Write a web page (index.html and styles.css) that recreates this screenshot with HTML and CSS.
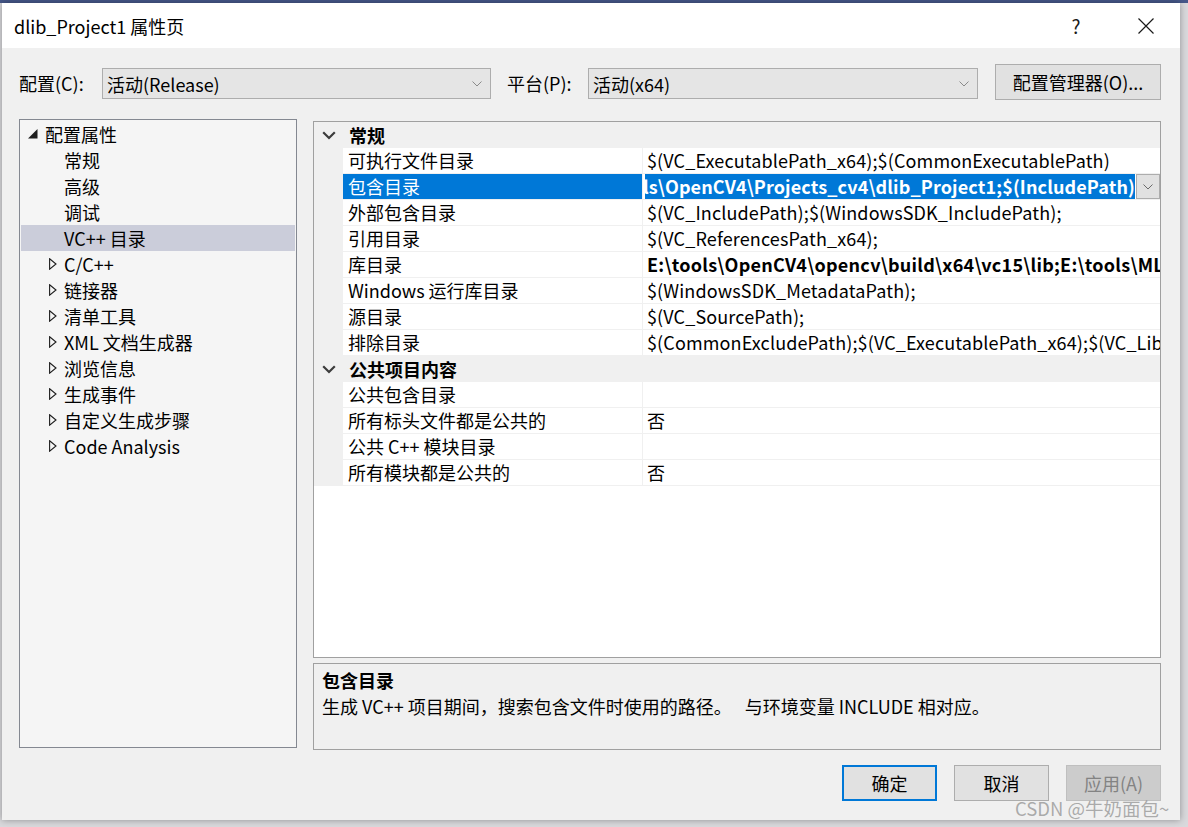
FILE: index.html
```html
<!DOCTYPE html>
<html>
<head>
    <meta charset="utf-8">
    <title>dlib_Project1 属性页</title>
    <link rel="stylesheet" href="styles.css">
</head>
<body>
    <div class="dialog">
        <div class="titlebar">
            <span class="title">dlib_Project1 属性页</span>
            <span class="help">?</span>
            <svg class="close" width="16" height="16" viewBox="0 0 16 16">
                <path d="M0.5 0.5 L15.5 15.5 M15.5 0.5 L0.5 15.5" stroke="#1a1a1a" stroke-width="1.2" fill="none"/>
            </svg>
        </div>
        <div class="content">
            <div class="config-row">
                <span class="lbl lbl-config">配置(C):</span>
                <div class="combo combo-config">
                    <span>活动(Release)</span>
                    <svg class="combo-arrow" width="10" height="6" viewBox="0 0 10 6"><path d="M0.5 0.5 L5 5 L9.5 0.5" stroke="#8a8a8a" fill="none"/></svg>
                </div>
                <span class="lbl lbl-platform">平台(P):</span>
                <div class="combo combo-platform">
                    <span>活动(x64)</span>
                    <svg class="combo-arrow" width="10" height="6" viewBox="0 0 10 6"><path d="M0.5 0.5 L5 5 L9.5 0.5" stroke="#8a8a8a" fill="none"/></svg>
                </div>
                <div class="btn btn-manager">配置管理器(O)...</div>
            </div>

            <div class="main">
                <div class="tree">
                    <div class="node root">
                        <svg class="tri-open" width="10" height="10" viewBox="0 0 10 10"><path d="M9.5 0 L9.5 9.5 L0 9.5 Z" fill="#1e1e1e"/></svg>
                        <span>配置属性</span>
                    </div>
                    <div class="node leaf">常规</div>
                    <div class="node leaf">高级</div>
                    <div class="node leaf">调试</div>
                    <div class="node leaf current">VC++ 目录</div>
                    <div class="node closed"><svg class="tri" width="8" height="12" viewBox="0 0 8 12"><path d="M0.6 0.8 L7 6 L0.6 11.2 Z" stroke="#1e1e1e" stroke-width="1.1" fill="none"/></svg><span>C/C++</span></div>
                    <div class="node closed"><svg class="tri" width="8" height="12" viewBox="0 0 8 12"><path d="M0.6 0.8 L7 6 L0.6 11.2 Z" stroke="#1e1e1e" stroke-width="1.1" fill="none"/></svg><span>链接器</span></div>
                    <div class="node closed"><svg class="tri" width="8" height="12" viewBox="0 0 8 12"><path d="M0.6 0.8 L7 6 L0.6 11.2 Z" stroke="#1e1e1e" stroke-width="1.1" fill="none"/></svg><span>清单工具</span></div>
                    <div class="node closed"><svg class="tri" width="8" height="12" viewBox="0 0 8 12"><path d="M0.6 0.8 L7 6 L0.6 11.2 Z" stroke="#1e1e1e" stroke-width="1.1" fill="none"/></svg><span>XML 文档生成器</span></div>
                    <div class="node closed"><svg class="tri" width="8" height="12" viewBox="0 0 8 12"><path d="M0.6 0.8 L7 6 L0.6 11.2 Z" stroke="#1e1e1e" stroke-width="1.1" fill="none"/></svg><span>浏览信息</span></div>
                    <div class="node closed"><svg class="tri" width="8" height="12" viewBox="0 0 8 12"><path d="M0.6 0.8 L7 6 L0.6 11.2 Z" stroke="#1e1e1e" stroke-width="1.1" fill="none"/></svg><span>生成事件</span></div>
                    <div class="node closed"><svg class="tri" width="8" height="12" viewBox="0 0 8 12"><path d="M0.6 0.8 L7 6 L0.6 11.2 Z" stroke="#1e1e1e" stroke-width="1.1" fill="none"/></svg><span>自定义生成步骤</span></div>
                    <div class="node closed"><svg class="tri" width="8" height="12" viewBox="0 0 8 12"><path d="M0.6 0.8 L7 6 L0.6 11.2 Z" stroke="#1e1e1e" stroke-width="1.1" fill="none"/></svg><span>Code Analysis</span></div>
                </div>

                <div class="right-col">
                    <div class="grid">
                        <div class="cat">
                            <span class="gut"><svg width="14" height="9" viewBox="0 0 14 9"><path d="M1.2 1.2 L7 7 L12.8 1.2" stroke="#3c3c3c" stroke-width="2.2" fill="none"/></svg></span>
                            <span class="cat-name">常规</span>
                        </div>
                        <div class="row"><span class="gut"></span><span class="name">可执行文件目录</span><span class="val">$(VC_ExecutablePath_x64);$(CommonExecutablePath)</span></div>
                        <div class="row selected">
                            <span class="gut"></span>
                            <span class="name">包含目录</span>
                            <span class="val">
                                <span class="edit"><span>E:\tools\OpenCV4\Projects_cv4\dlib_Project1;$(IncludePath)</span></span>
                                <span class="drop"><svg width="10" height="6" viewBox="0 0 10 6"><path d="M0.5 0.5 L5 5 L9.5 0.5" stroke="#6a6a6a" fill="none"/></svg></span>
                            </span>
                        </div>
                        <div class="row"><span class="gut"></span><span class="name">外部包含目录</span><span class="val">$(VC_IncludePath);$(WindowsSDK_IncludePath);</span></div>
                        <div class="row"><span class="gut"></span><span class="name">引用目录</span><span class="val">$(VC_ReferencesPath_x64);</span></div>
                        <div class="row"><span class="gut"></span><span class="name">库目录</span><span class="val bold">E:\tools\OpenCV4\opencv\build\x64\vc15\lib;E:\tools\ML\dlib\build\Release;$(LibraryPath)</span></div>
                        <div class="row"><span class="gut"></span><span class="name">Windows 运行库目录</span><span class="val">$(WindowsSDK_MetadataPath);</span></div>
                        <div class="row"><span class="gut"></span><span class="name">源目录</span><span class="val">$(VC_SourcePath);</span></div>
                        <div class="row"><span class="gut"></span><span class="name">排除目录</span><span class="val">$(CommonExcludePath);$(VC_ExecutablePath_x64);$(VC_LibraryPath_x64)</span></div>
                        <div class="cat">
                            <span class="gut"><svg width="14" height="9" viewBox="0 0 14 9"><path d="M1.2 1.2 L7 7 L12.8 1.2" stroke="#3c3c3c" stroke-width="2.2" fill="none"/></svg></span>
                            <span class="cat-name">公共项目内容</span>
                        </div>
                        <div class="row"><span class="gut"></span><span class="name">公共包含目录</span><span class="val"></span></div>
                        <div class="row"><span class="gut"></span><span class="name">所有标头文件都是公共的</span><span class="val">否</span></div>
                        <div class="row"><span class="gut"></span><span class="name">公共 C++ 模块目录</span><span class="val"></span></div>
                        <div class="row"><span class="gut"></span><span class="name">所有模块都是公共的</span><span class="val">否</span></div>
                    </div>
                    <div class="desc">
                        <div class="desc-title">包含目录</div>
                        <div class="desc-text">生成 VC++ 项目期间，搜索包含文件时使用的路径。　 与环境变量 INCLUDE 相对应。</div>
                    </div>
                </div>
            </div>

            <div class="buttons">
                <div class="btn btn-ok">确定</div>
                <div class="btn">取消</div>
                <div class="btn btn-disabled">应用(A)</div>
            </div>
        </div>
    </div>
    <div class="watermark">CSDN @牛奶面包~</div>
</body>
</html>
```

FILE: styles.css
```css
* {
    margin: 0;
    padding: 0;
    box-sizing: border-box;
}

body {
    background: linear-gradient(#46588a 0, #46588a 3px, #d9d9dc 3px);
    padding: 3px 0 0 2px;
    font-family: "Noto Sans CJK SC", sans-serif;
    font-size: 18px;
    color: #000;
    height: 827px;
    overflow: hidden;
}

.dialog {
    width: 1178px;
    height: 817px;
    background: #f0f0f0;
    box-shadow: 0 0 7px rgba(0, 0, 0, 0.35);
    display: flex;
    flex-direction: column;
}

/* title bar */
.titlebar {
    height: 45px;
    background: #fff;
    display: flex;
    align-items: center;
    padding: 0 26px 0 12px;
}

.title {
    flex: 1;
    font-size: 18px;
    color: #000;
}

.help {
    width: 14px;
    font-size: 19px;
    color: #1a1a1a;
    margin-right: 55px;
    text-align: center;
}

.content {
    flex: 1;
    padding: 16px 19px 0 17px;
    display: flex;
    flex-direction: column;
}

/* config row */
.config-row {
    display: flex;
    align-items: center;
    height: 36px;
}

.lbl {
    line-height: 31px;
    margin-top: 3px;
}

.lbl-config {
    width: 83px;
}

.lbl-platform {
    width: 81px;
    margin-left: 16px;
}

.combo {
    height: 31px;
    margin-top: 3px;
    background: #e5e5e5;
    border: 1px solid #adadad;
    display: flex;
    align-items: center;
    padding: 0 8px 0 4px;
}

.combo span {
    flex: 1;
}

.combo-config {
    width: 389px;
}

.combo-platform {
    width: 390px;
}

.btn {
    width: 95px;
    height: 36px;
    background: #e1e1e1;
    border: 1px solid #adadad;
    display: flex;
    align-items: center;
    justify-content: center;
}

.btn-manager {
    width: 166px;
    margin-left: 17px;
}

/* main area */
.main {
    display: flex;
    gap: 16px;
    margin-top: 19px;
}

.tree {
    width: 278px;
    height: 629px;
    background: #f5f5f5;
    border: 1px solid #848891;
    padding-top: 1px;
}

.node {
    height: 26px;
    line-height: 26px;
    display: flex;
    align-items: center;
    white-space: nowrap;
}

.node.root {
    padding-left: 8px;
}

.node.root svg {
    margin-right: 7px;
}

.node.leaf {
    padding-left: 44px;
}

.node.current {
    background: #cbcdda;
    margin: 0 1px;
    padding-left: 43px;
}

.node.closed {
    padding-left: 29px;
}

.node.closed svg {
    margin-right: 7px;
}

.right-col {
    width: 848px;
    padding-top: 2px;
}

.grid {
    height: 537px;
    background: #fff;
    border: 1px solid #a0a0a0;
    overflow: hidden;
}

.cat {
    height: 26px;
    background: #f0f0f0;
    display: flex;
    align-items: center;
}

.gut {
    width: 29px;
    height: 100%;
    background: #f0f0f0;
    display: flex;
    align-items: center;
    padding-left: 8px;
    flex-shrink: 0;
}

.cat-name {
    font-weight: bold;
    padding-left: 6px;
}

.row {
    height: 26px;
    display: flex;
    border-bottom: 1px solid #f0f0f0;
    line-height: 25px;
    white-space: nowrap;
}

.name {
    width: 300px;
    padding-left: 5px;
    border-right: 1px solid #f0f0f0;
    flex-shrink: 0;
}

.val {
    flex: 1;
    overflow: hidden;
    padding-left: 4px;
    letter-spacing: 0.13px;
}

.val.bold {
    font-weight: bold;
    letter-spacing: 0.26px;
}

.row.selected .name {
    background: #0078d7;
    color: #fff;
}

.row.selected .val {
    display: flex;
    padding-left: 2px;
}

.edit {
    flex: 1;
    display: flex;
    justify-content: flex-end;
    overflow: hidden;
    background: #0078d7;
    color: #fff;
    font-weight: bold;
}

.drop {
    width: 24px;
    margin-left: 1px;
    background: #e1e1e1;
    border: 1px solid #adadad;
    display: flex;
    align-items: center;
    justify-content: center;
}

.desc {
    height: 87px;
    margin-top: 5px;
    border: 1px solid #a0a0a0;
    background: #f0f0f0;
    padding: 3px 8px 0 8px;
    line-height: 26px;
}

.desc-title {
    font-weight: bold;
}

/* bottom buttons */
.buttons {
    display: flex;
    justify-content: flex-end;
    gap: 17px;
    margin-top: 15px;
}

.btn-ok {
    border: 2px solid #0078d7;
}

.btn-disabled {
    background: #cccccc;
    border-color: #bfbfbf;
    color: #838383;
}

.watermark {
    position: absolute;
    left: 1015px;
    top: 795px;
    font-size: 18.5px;
    color: rgba(110, 110, 110, 0.55);
    white-space: nowrap;
}
```
